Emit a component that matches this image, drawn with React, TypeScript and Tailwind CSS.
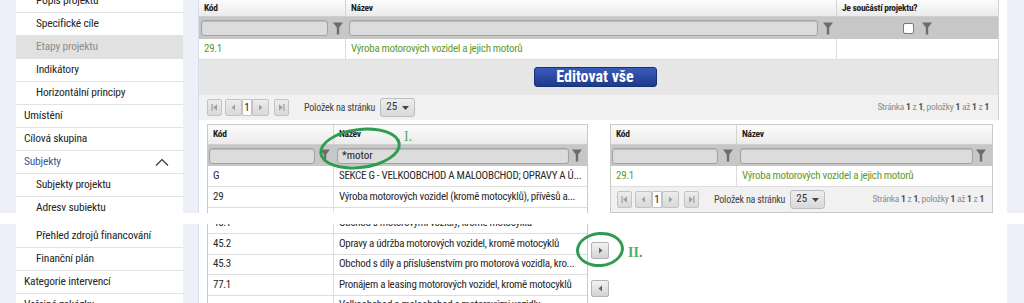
import React from "react";

type Item = { label: string; sub?: boolean; selected?: boolean; blue?: boolean; chevron?: boolean };

const topItems: Item[] = [
  { label: "Popis projektu", sub: true },
  { label: "Specifické cíle", sub: true },
  { label: "Etapy projektu", sub: true, selected: true },
  { label: "Indikátory", sub: true },
  { label: "Horizontální principy", sub: true },
  { label: "Umístění" },
  { label: "Cílová skupina" },
  { label: "Subjekty", blue: true, chevron: true },
  { label: "Subjekty projektu", sub: true },
  { label: "Adresv subiektu", sub: true },
];

const bottomItems: Item[] = [
  { label: "Přehled zdrojů financování", sub: true },
  { label: "Finanční plán", sub: true },
  { label: "Kategorie intervencí" },
  { label: "Veřejné zakázky" },
];

function SideItem({ it }: { it: Item }) {
  return (
    <div
      className={`h-[23px] shrink-0 flex items-center border-b border-[#e3e3e3] text-[11.5px] tracking-[-0.2px] ${
        it.sub ? "pl-[20px]" : "pl-[8px]"
      } ${it.selected ? "bg-[#e1e1e1] text-[#8d8d8d]" : it.blue ? "text-[#3b5997]" : "text-[#262626]"}`}
    >
      <span className="flex-1 whitespace-nowrap">{it.label}</span>
      {it.chevron && (
        <svg width="14" height="8" viewBox="0 0 14 8" className="mr-[14px]">
          <polyline points="1,7.5 7,1.5 13,7.5" fill="none" stroke="#333" strokeWidth="1.2" />
        </svg>
      )}
    </div>
  );
}

function Funnel() {
  return (
    <svg width="10" height="13" viewBox="0 0 10 13" className="shrink-0">
      <path d="M0 0.5H10L6.2 5.5V12.5H3.8V5.5Z" fill="#6c6c6c" />
    </svg>
  );
}

function FilterInput({ value, w }: { value?: string; w: string }) {
  return (
    <div
      className={`${w} h-[16px] shrink-0 rounded-[3px] border border-[#a3a3a3] bg-[#dcdcdc] shadow-[inset_0_1px_1px_rgba(0,0,0,0.15)] pl-[4px] text-[11px] leading-[14px] text-[#222]`}
    >
      {value}
    </div>
  );
}

function Glyph({ kind, color = "#a0a0a0" }: { kind: "first" | "prev" | "next" | "last"; color?: string }) {
  return (
    <svg width="7" height="7" viewBox="0 0 7 7" fill={color}>
      {kind === "first" && (
        <>
          <rect x="0.5" y="0" width="1.2" height="7" />
          <path d="M6 0.3V6.7L2.2 3.5Z" />
        </>
      )}
      {kind === "prev" && <path d="M5 0.5V6.5L1.5 3.5Z" />}
      {kind === "next" && <path d="M2 0.5V6.5L5.5 3.5Z" />}
      {kind === "last" && (
        <>
          <path d="M1 0.3V6.7L4.8 3.5Z" />
          <rect x="5.3" y="0" width="1.2" height="7" />
        </>
      )}
    </svg>
  );
}

function PBtn({ w, kind }: { w: string; kind: "first" | "prev" | "next" | "last" }) {
  return (
    <div
      className={`${w} h-[17px] flex items-center justify-center border border-[#c3c3c3] rounded-[2px] bg-linear-to-b from-[#ececec] to-[#d9d9d9]`}
    >
      <Glyph kind={kind} />
    </div>
  );
}

function Pager({ pl, pr }: { pl: string; pr: string }) {
  return (
    <div className={`flex items-center h-full ${pl} ${pr}`}>
      <PBtn w="w-[15px]" kind="first" />
      <div className="w-[3px]" />
      <PBtn w="w-[17px]" kind="prev" />
      <div className="w-[10px] h-[17px] bg-white border border-[#c3c3c3] text-[11px] leading-[15px] text-center text-[#222]">
        1
      </div>
      <PBtn w="w-[17px]" kind="next" />
      <div className="w-[5px]" />
      <PBtn w="w-[15px]" kind="last" />
      <span className="ml-[15px] text-[10px] tracking-[-0.2px] text-[#444] whitespace-nowrap">Položek na stránku</span>
      <div className="ml-[5px] w-[35px] h-[19px] flex items-center justify-between px-[5px] border border-[#bdbdbd] rounded-[3px] bg-linear-to-b from-[#eeeeee] to-[#d8d8d8] text-[11px] text-[#333]">
        <span>25</span>
        <svg width="7" height="4" viewBox="0 0 7 4">
          <path d="M0 0H7L3.5 4Z" fill="#444" />
        </svg>
      </div>
      <div className="flex-1" />
      <span className="text-[9.5px] tracking-[-0.25px] text-[#8c8c8c] whitespace-nowrap">
        Stránka <b className="text-[#555]">1</b> z <b className="text-[#555]">1</b>, položky <b className="text-[#555]">1</b> až{" "}
        <b className="text-[#555]">1</b> z <b className="text-[#555]">1</b>
      </span>
    </div>
  );
}

function HeaderRow({ cols, labels, h }: { cols: string; labels: string[]; h: string }) {
  return (
    <div className={`grid ${cols} ${h} bg-linear-to-b from-[#fcfcfc] to-[#ebebeb] border-b border-[#cfcfcf]`}>
      {labels.map((l, i) => (
        <div
          key={i}
          className={`flex items-center pl-[5px] text-[9.5px] tracking-[-0.3px] font-bold text-[#1e1e1e] ${
            i < labels.length - 1 ? "border-r border-[#d4d4d4]" : ""
          }`}
        >
          {l}
        </div>
      ))}
    </div>
  );
}

function DataRow({ cols, cells, h, green }: { cols: string; cells: string[]; h: string; green?: boolean }) {
  return (
    <div className={`grid ${cols} ${h} bg-white border-b border-[#dddddd]`}>
      {cells.map((c, i) => (
        <div
          key={i}
          className={`flex items-center pl-[5px] pr-[4px] text-[11px] tracking-[-0.3px] whitespace-nowrap overflow-hidden ${
            green ? "text-[#5f9a2b]" : "text-[#2a2a2a]"
          } ${i < cells.length - 1 ? "border-r border-[#dddddd]" : ""}`}
        >
          {c}
        </div>
      ))}
    </div>
  );
}

function SmallTable({
  filter,
  children,
  w,
  kodW,
  nazW,
}: {
  filter?: string;
  children: React.ReactNode;
  w: string;
  kodW: string;
  nazW: string;
}) {
  return (
    <div className={`${w} border border-[#c9c9c9] flex flex-col self-start`}>
      <HeaderRow cols="grid-cols-[126px_1fr]" labels={["Kód", "Název"]} h="h-[20px]" />
      <div className="grid grid-cols-[126px_1fr] h-[21px] bg-[#c7c7c7]">
        <div className="flex items-center pl-[1px] gap-[5px]">
          <FilterInput w={kodW} />
          <Funnel />
        </div>
        <div className="flex items-center pl-[3px] gap-[3px]">
          <FilterInput w={nazW} value={filter} />
          <Funnel />
        </div>
      </div>
      {children}
    </div>
  );
}

function MoveBtn({ dir }: { dir: "next" | "prev" }) {
  return (
    <div className="w-[18px] h-[17px] flex items-center justify-center border border-[#b3b3b3] rounded-[2px] bg-linear-to-b from-[#f2f2f2] to-[#d3d3d3]">
      <Glyph kind={dir} color="#666" />
    </div>
  );
}

const strip = "bg-[#edf0f9]";

export default function App() {
  return (
    <div className="w-[1024px] h-[303px] overflow-hidden bg-white font-['Roboto_Condensed']">
      {/* top screenshot */}
      <div className="flex h-[213px] overflow-hidden">
        <div className={`w-[16px] shrink-0 ${strip}`} />
        <div className="w-[167px] shrink-0 bg-white flex flex-col">
          <div className="mt-[-10px] flex flex-col">
            {topItems.map((it, i) => (
              <SideItem key={i} it={it} />
            ))}
          </div>
        </div>
        <div className={`w-[15px] shrink-0 ${strip}`} />
        <div className="w-[809px] shrink-0 bg-white relative border-l border-[#d9dce6]">
          <div className="w-[800px] flex flex-col border-r border-[#d2d2d2]">
            <HeaderRow
              cols="grid-cols-[147px_491px_1fr]"
              labels={["Kód", "Název", "Je součástí projektu?"]}
              h="h-[17px]"
            />
            <div className="grid grid-cols-[147px_491px_1fr] h-[22px] bg-[#c7c7c7]">
              <div className="flex items-center pl-[2px] gap-[5px]">
                <FilterInput w="w-[127px]" />
                <Funnel />
              </div>
              <div className="flex items-center pl-[3px] gap-[5px]">
                <FilterInput w="w-[469px]" />
                <Funnel />
              </div>
              <div className="flex items-center justify-center gap-[8px]">
                <div className="w-[11px] h-[11px] bg-white border border-[#777] rounded-[2px]" />
                <Funnel />
              </div>
            </div>
            <DataRow
              cols="grid-cols-[147px_491px_1fr]"
              cells={["29.1", "Výroba motorových vozidel a jejich motorů", ""]}
              h="h-[21px]"
              green
            />
            <div className="h-[35px] bg-[#e6e6e6] flex justify-center pt-[7px] pr-[7px]">
              <div className="w-[123px] h-[20px] rounded-[3px] border border-[#163078] bg-linear-to-b from-[#3a5cba] to-[#1d3a8c] flex items-center justify-center text-white text-[16px] font-bold leading-none">
                Editovat vše
              </div>
            </div>
            <div className="h-[25px] bg-[#f1f1f1]">
              <Pager pl="pl-[8px]" pr="pr-[9px]" />
            </div>
          </div>
          <div className="flex pt-[4px] pl-[8px]">
            <SmallTable w="w-[381px]" kodW="w-[106px]" nazW="w-[232px]" filter="*motor">
              <DataRow
                cols="grid-cols-[126px_1fr]"
                cells={["G", "SEKCE G - VELKOOBCHOD A MALOOBCHOD; OPRAVY A Ú..."]}
                h="h-[21px]"
              />
              <DataRow
                cols="grid-cols-[126px_1fr]"
                cells={["29", "Výroba motorových vozidel (kromě motocyklů), přívěsů a..."]}
                h="h-[21px]"
              />
              <DataRow cols="grid-cols-[126px_1fr]" cells={["", ""]} h="h-[21px]" />
            </SmallTable>
            <div className="w-[22px] shrink-0" />
            <SmallTable w="w-[383px]" kodW="w-[106px]" nazW="w-[233px]">
              <DataRow
                cols="grid-cols-[126px_1fr]"
                cells={["29.1", "Výroba motorových vozidel a jejich motorů"]}
                h="h-[21px]"
                green
              />
              <div className="h-[25px] bg-[#f1f1f1]">
                <Pager pl="pl-[6px]" pr="pr-[8px]" />
              </div>
            </SmallTable>
          </div>
          {/* annotation I */}
          <div className="absolute left-[120px] top-[128px] w-[82px] h-[41px] rounded-[50%] border-[3px] border-[#2f9c50] -rotate-[7deg]" />
          <div className="absolute left-[205px] top-[126px] text-[14px] font-['Liberation_Serif'] text-[#4dae68]">
            I.
          </div>
        </div>
        <div className={`flex-1 ${strip}`} />
      </div>

      {/* gap between stitched screenshots */}
      <div className="h-[11px] bg-white" />

      {/* bottom screenshot */}
      <div className="flex h-[79px] overflow-hidden">
        <div className={`w-[16px] shrink-0 ${strip}`} />
        <div className="w-[167px] shrink-0 bg-white flex flex-col">
          <div className="mt-[1px] flex flex-col">
            {bottomItems.map((it, i) => (
              <SideItem key={i} it={it} />
            ))}
          </div>
        </div>
        <div className={`w-[15px] shrink-0 ${strip}`} />
        <div className="w-[809px] shrink-0 bg-white relative border-l border-[#d9dce6] flex pl-[8px]">
          <div className="w-[381px] shrink-0 border-x border-[#c9c9c9] mt-[-10px] self-start flex flex-col">
            <DataRow cols="grid-cols-[126px_1fr]" cells={["45.1", "Obchod s motorovými vozidly, kromě motocyklů"]} h="h-[20px]" />
            <DataRow cols="grid-cols-[126px_1fr]" cells={["45.2", "Opravy a údržba motorových vozidel, kromě motocyklů"]} h="h-[21px]" />
            <DataRow
              cols="grid-cols-[126px_1fr]"
              cells={["45.3", "Obchod s díly a příslušenstvím pro motorová vozidla, kro..."]}
              h="h-[20px]"
            />
            <DataRow cols="grid-cols-[126px_1fr]" cells={["77.1", "Pronájem a leasing motorových vozidel, kromě motocyklů"]} h="h-[21px]" />
            <DataRow cols="grid-cols-[126px_1fr]" cells={["", "Velkoobchod a maloobchod s motorovými vozidly"]} h="h-[20px]" />
          </div>
          <div className="flex flex-col ml-[3px] pt-[18px]">
            <MoveBtn dir="next" />
            <div className="h-[21px]" />
            <MoveBtn dir="prev" />
          </div>
          {/* annotation II */}
          <div className="absolute left-[377px] top-[8px] w-[48px] h-[35px] rounded-[50%] border-[3px] border-[#2f9c50] -rotate-[5deg]" />
          <div className="absolute left-[429px] top-[18px] text-[14px] font-bold font-['Liberation_Serif'] text-[#4dae68]">
            II.
          </div>
        </div>
        <div className={`flex-1 ${strip}`} />
      </div>
    </div>
  );
}
